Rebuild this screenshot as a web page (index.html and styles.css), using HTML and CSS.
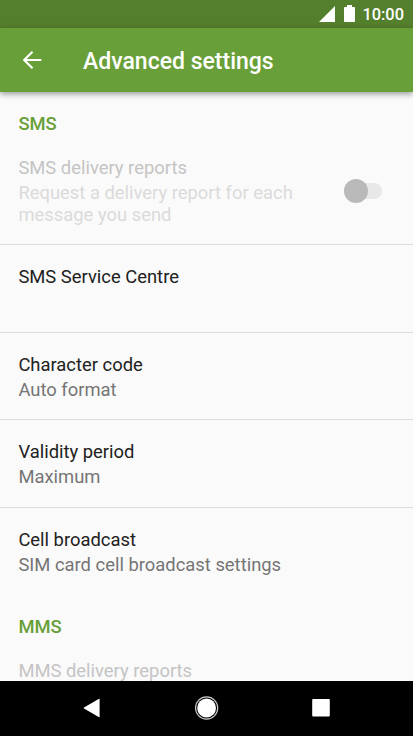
FILE: index.html
```html
<!DOCTYPE html>
<html lang="en">
<head>
  <meta charset="UTF-8" />
  <meta name="viewport" content="width=device-width, initial-scale=1.0"/>
  <title>Advanced settings</title>
  <link rel="stylesheet" href="styles.css">
</head>
<body>
  <div class="statusbar">
    <svg class="signal" width="16" height="16" viewBox="0 0 16 16"><path d="M0 16L16 0V16Z"/></svg>
    <svg class="battery" width="11" height="17" viewBox="0 0 11 17"><path d="M3 0h5v2h2.2q.8 0 .8.8v13.4q0 .8-.8.8H.8q-.8 0-.8-.8V2.8Q0 2 .8 2H3z"/></svg>
    <span class="clock">10:00</span>
  </div>
  <header>
    <svg class="back" width="20" height="20" viewBox="0 0 20 20"><path d="M19.3 10H2.5M10.5 1.7L2.2 10l8.3 8.3"/></svg>
    <h1>Advanced settings</h1>
  </header>
  <main>
    <h2>SMS</h2>
    <div class="item first disabled">
      <div class="text">
        <div class="title">SMS delivery reports</div>
        <div class="summary">Request a delivery report for each message you send</div>
      </div>
      <div class="switch"><div class="thumb"></div></div>
    </div>
    <div class="item">
      <div class="text">
        <div class="title">SMS Service Centre</div>
      </div>
    </div>
    <div class="item">
      <div class="text">
        <div class="title">Character code</div>
        <div class="summary">Auto format</div>
      </div>
    </div>
    <div class="item">
      <div class="text">
        <div class="title">Validity period</div>
        <div class="summary">Maximum</div>
      </div>
    </div>
    <div class="item">
      <div class="text">
        <div class="title">Cell broadcast</div>
        <div class="summary">SIM card cell broadcast settings</div>
      </div>
    </div>
    <h2 class="mms">MMS</h2>
    <div class="item first disabled">
      <div class="text">
        <div class="title">MMS delivery reports</div>
      </div>
    </div>
  </main>
  <nav>
    <svg width="18" height="20" viewBox="0 0 18 20"><path d="M16.1.7Q16.6.4 16.6 1v18q0 .6-.5.3L1 10.5q-.8-.5 0-1z"/></svg>
    <svg width="24" height="24" viewBox="0 0 24 24"><circle cx="11.6" cy="12" r="9.4"/><circle class="ring" cx="11.6" cy="12" r="11.1"/></svg>
    <svg width="18" height="18" viewBox="0 0 18 18"><rect x=".2" width="17.6" height="17.6" rx="1"/></svg>
  </nav>
</body>
</html>
```

FILE: styles.css
```css
body {
  margin: 0;
  height: 736px;
  display: flex;
  flex-direction: column;
  overflow: hidden;
  font-family: Roboto, sans-serif;
  background-color: #fafafa;
  color: #212121;
}
svg {
  display: block;
  fill: white;
}
.statusbar {
  flex: none;
  display: flex;
  align-items: center;
  justify-content: flex-end;
  box-sizing: border-box;
  height: 28px;
  padding-right: 9px;
  background-color: #547f2d;
  color: white;
}
.battery {
  margin: -1px 7px 0 9px;
}
.clock {
  font-size: 16.4px;
  font-weight: 500;
  line-height: 28px;
  padding-top: 1px;
}
header {
  flex: none;
  display: flex;
  align-items: center;
  height: 64px;
  padding-left: 22px;
  background-color: #689f38;
  color: white;
  box-shadow: 0 2px 6px rgba(0,0,0,0.4);
  z-index: 1;
}
.back {
  fill: none;
  stroke: white;
  stroke-width: 2.2;
}
h1 {
  margin: 3px 0 0 41px;
  font-size: 23px;
  font-weight: 500;
}
main {
  flex: 1;
  min-height: 0;
  overflow: hidden;
}
h2 {
  margin: 0;
  padding: 19px 18.4px 8px;
  font-size: 18.4px;
  font-weight: 500;
  line-height: 25px;
  color: #689f38;
}
.item {
  display: flex;
  justify-content: space-between;
  box-sizing: border-box;
  height: 87.5px;
  padding: 19px 31px 0 18.4px;
  border-top: 1px solid #dedede;
  font-size: 18.4px;
}
.item.first {
  height: 100px;
  padding-top: 11px;
  border-top: none;
}
.title {
  line-height: 25px;
}
.summary {
  max-width: 290px;
  line-height: 22px;
  padding-top: 2px;
  color: #757575;
}
.disabled .title {
  color: #c4c4c4;
}
.disabled .summary {
  color: #dadada;
}
.switch {
  width: 38px;
  height: 16px;
  margin-top: 28px;
  border-radius: 8px;
  background-color: #e8e8e8;
}
.thumb {
  width: 24px;
  height: 24px;
  margin-top: -4px;
  border-radius: 50%;
  background-color: #b9b9b9;
}
.mms {
  padding-top: 20px;
}
nav {
  flex: none;
  display: flex;
  align-items: center;
  justify-content: space-between;
  box-sizing: border-box;
  height: 55px;
  padding: 0 83px 1px;
  background-color: black;
}
.ring {
  fill: none;
  stroke: #ccc;
  stroke-width: 1.2;
}
```
